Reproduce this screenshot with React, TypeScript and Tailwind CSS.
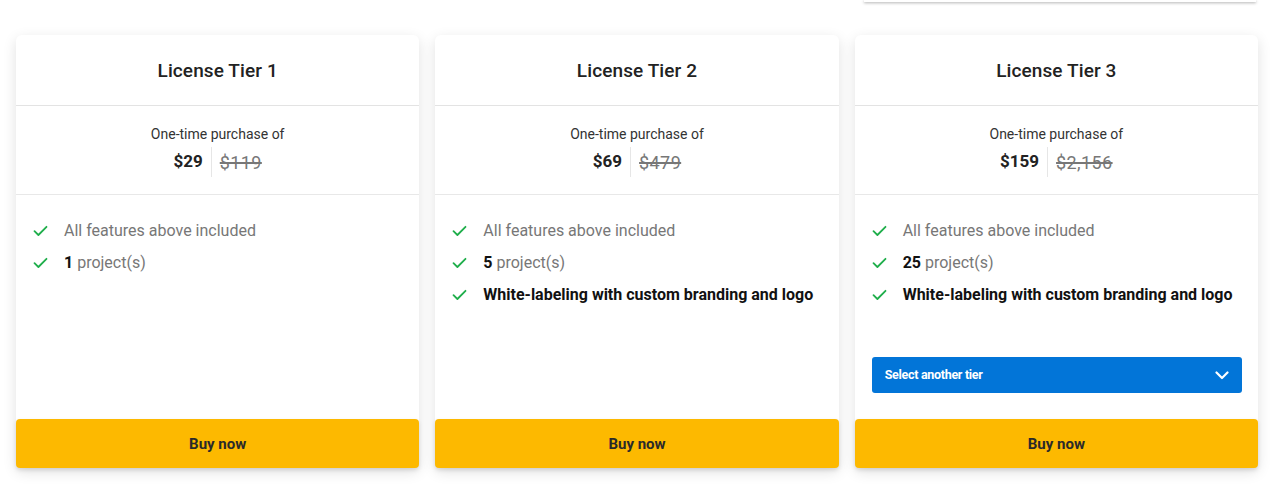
import React from "react";

type Tier = {
  name: string;
  price: string;
  old: string;
  projects: string;
  white: boolean;
  select: boolean;
};

const tiers: Tier[] = [
  { name: "License Tier 1", price: "$29", old: "$119", projects: "1", white: false, select: false },
  { name: "License Tier 2", price: "$69", old: "$479", projects: "5", white: true, select: false },
  { name: "License Tier 3", price: "$159", old: "$2,156", projects: "25", white: true, select: true },
];

function Check() {
  return (
    <svg width="15" height="12" viewBox="0 0 15 12" fill="none" className="shrink-0">
      <path d="M1.5 6.2 L5.4 10 L13.5 1.8" stroke="#1fae4b" strokeWidth="1.8" strokeLinecap="round" strokeLinejoin="round" />
    </svg>
  );
}

function Card({ t }: { t: Tier }) {
  return (
    <div className="flex flex-col bg-white rounded-md shadow-[0_4px_14px_rgba(0,0,0,0.12)]">
      <div className="h-[71px] flex items-center justify-center border-b border-[#e3e3e3] pt-[3px]">
        <span className="text-[19px] font-medium text-[#222] tracking-[0.1px]">{t.name}</span>
      </div>
      <div className="h-[89px] flex flex-col items-center border-b border-[#e8e8e8] pt-[18px]">
        <div className="text-[14px] text-[#333] leading-5">One-time purchase of</div>
        <div className="flex items-center mt-[3px] h-[30px]">
          <span className="text-[17px] font-bold text-[#222] pr-2">{t.price}</span>
          <span className="w-px h-[30px] bg-[#e6e6e6]" />
          <span className="text-[18px] text-[#777] line-through pl-2 decoration-[1.5px] tracking-[0.4px]">{t.old}</span>
        </div>
      </div>
      <div className="flex flex-col pt-5 pl-[17px] pr-4">
        <div className="h-8 flex items-center gap-4">
          <Check />
          <span className="text-[16px] text-[#777]">All features above included</span>
        </div>
        <div className="h-8 flex items-center gap-4">
          <Check />
          <span className="text-[16px] text-[#777]">
            <span className="font-bold text-[#111]">{t.projects}</span> project(s)
          </span>
        </div>
        {t.white && (
          <div className="h-8 flex items-center gap-4">
            <Check />
            <span className="text-[16px] font-bold text-[#111]">White-labeling with custom branding and logo</span>
          </div>
        )}
        {t.select && (
          <div className="mt-[46px] mb-[26px] h-9 rounded-[3px] bg-[#0275d8] flex items-center justify-between pl-[13px] pr-[13px]">
            <span className="text-[12.5px] font-bold text-white tracking-[-0.3px]">Select another tier</span>
            <svg width="14" height="9" viewBox="0 0 14 9" fill="none">
              <path d="M1.5 1.5 L7 7 L12.5 1.5" stroke="white" strokeWidth="2.2" strokeLinecap="round" strokeLinejoin="round" />
            </svg>
          </div>
        )}
      </div>
      <div className="mt-auto h-[49px] rounded-[4px] bg-[#fdb900] flex items-center justify-center shadow-[0_2px_4px_rgba(0,0,0,0.12)] pt-[2px]">
        <span className="text-[15px] font-bold text-[#2a2a2a]">Buy now</span>
      </div>
    </div>
  );
}

export default function App() {
  return (
    <div className="w-[1282px] h-[492px] bg-white overflow-hidden" style={{ fontFamily: "Roboto, 'Liberation Sans', sans-serif" }}>
      <div className="flex justify-end pr-[26px]">
        <div className="w-[392px] h-[2px] bg-white shadow-[0_1px_3px_rgba(0,0,0,0.35)]" />
      </div>
      <div className="grid grid-cols-3 gap-4 pl-4 pr-6 pt-[33px]">
        {tiers.map((t) => (
          <Card key={t.name} t={t} />
        ))}
      </div>
    </div>
  );
}
